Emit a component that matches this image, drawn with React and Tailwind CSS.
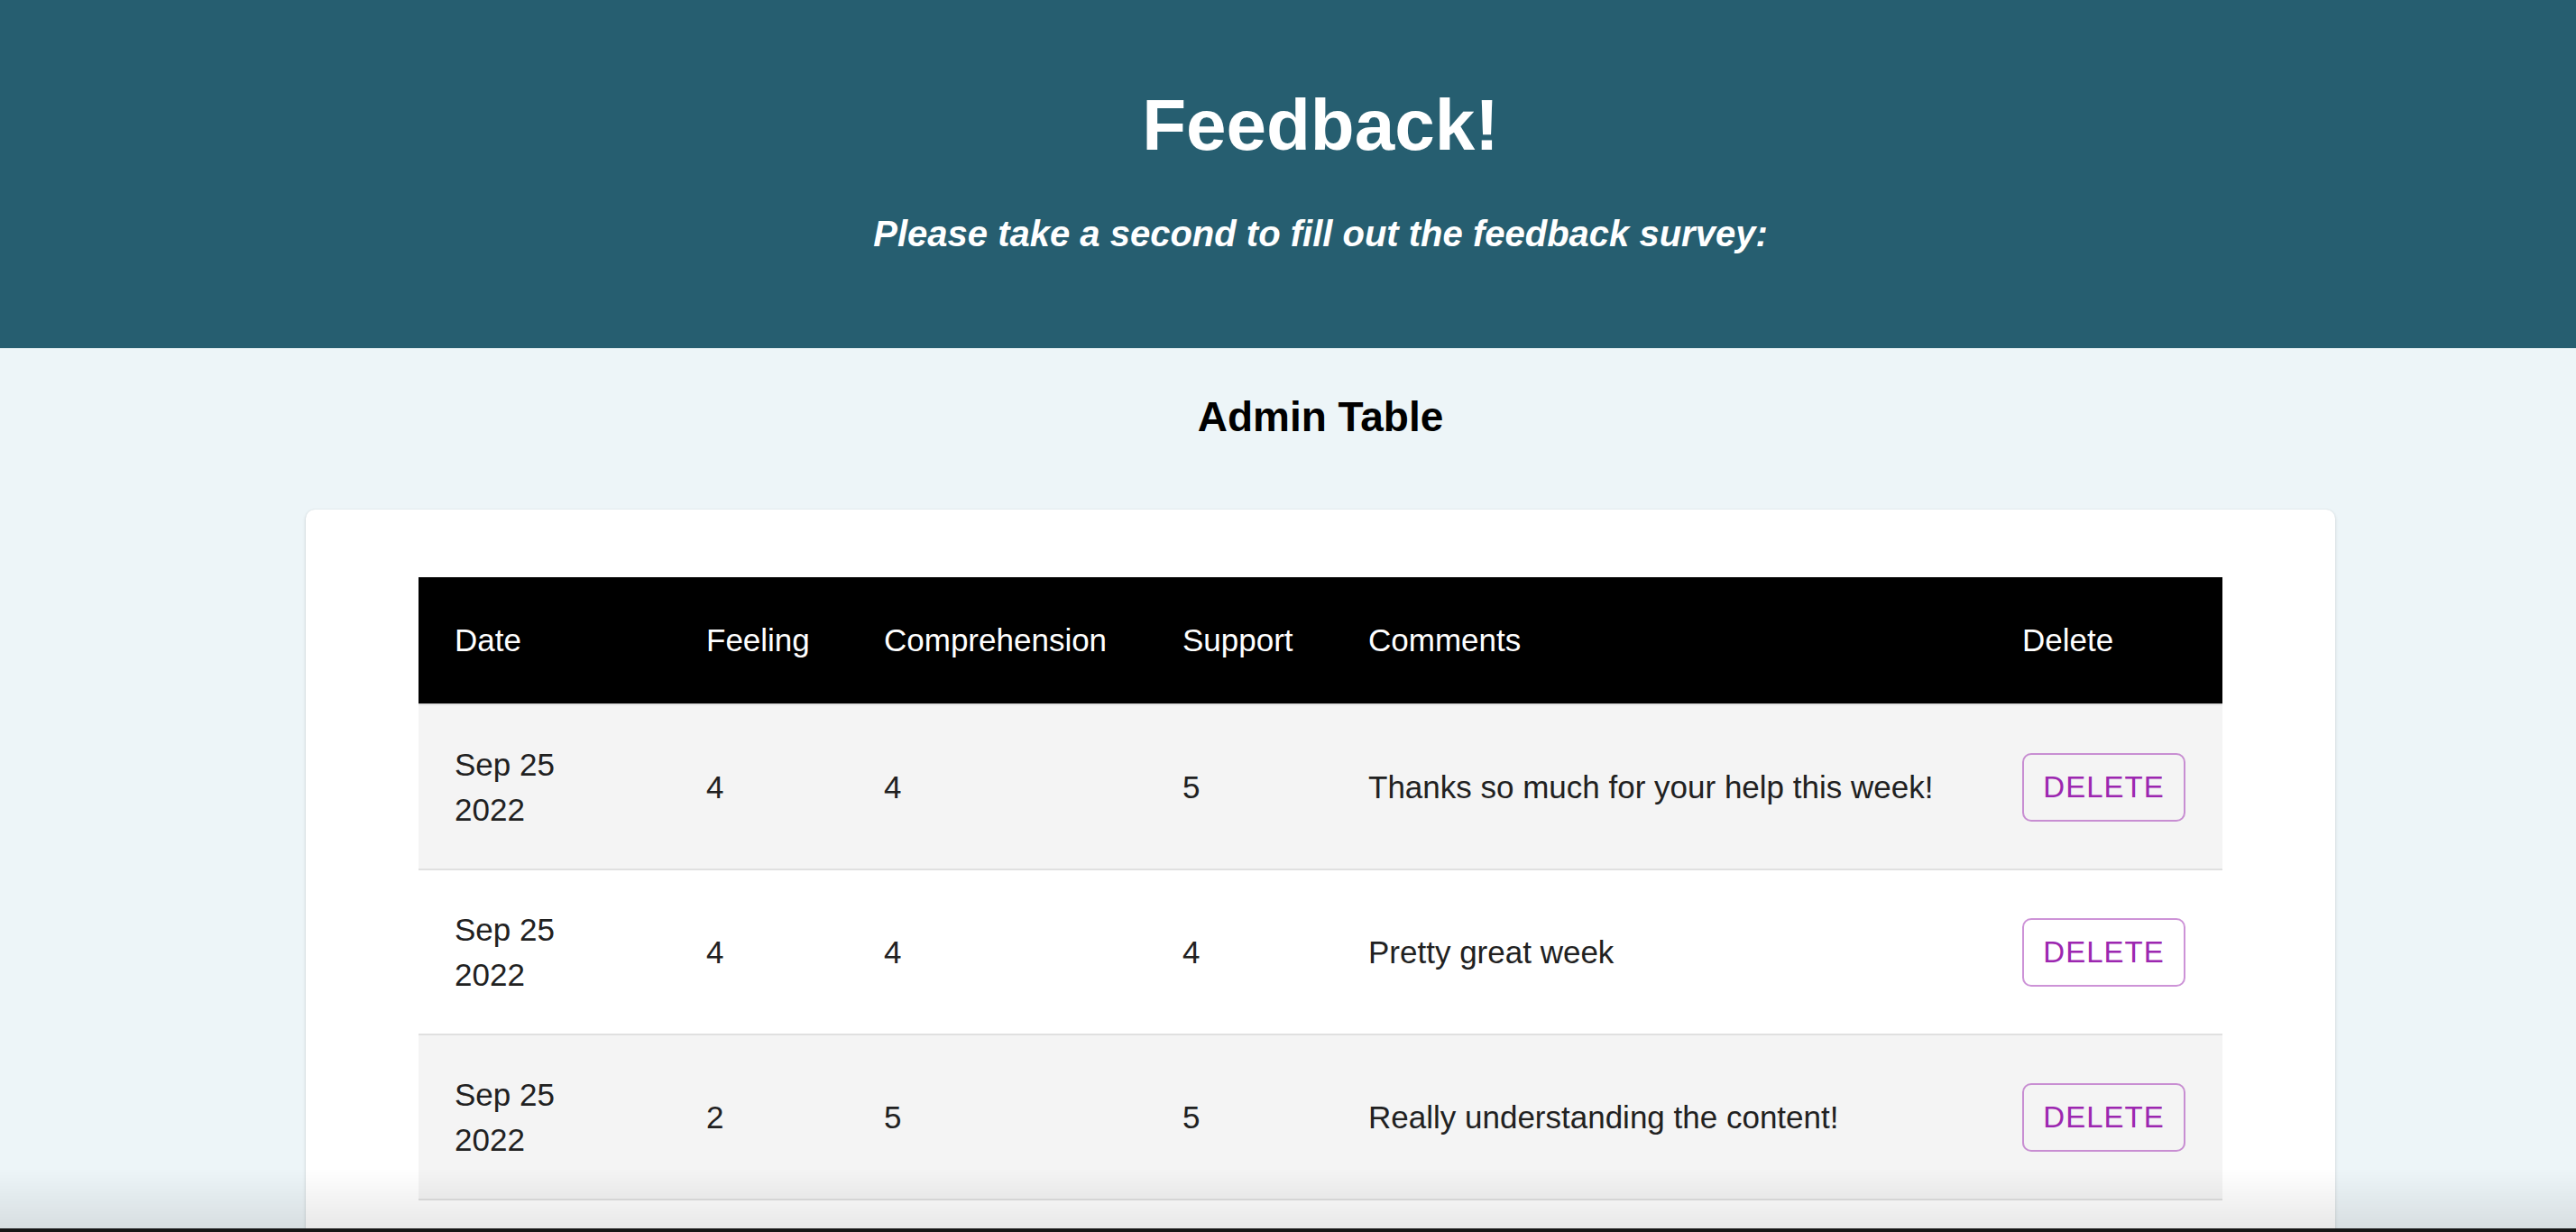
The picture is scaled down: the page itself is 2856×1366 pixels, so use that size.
import React from "react";

const rows = [
  { d1: "Sep 25", d2: "2022", feeling: 4, comp: 4, support: 5, comments: "Thanks so much for your help this week!" },
  { d1: "Sep 25", d2: "2022", feeling: 4, comp: 4, support: 4, comments: "Pretty great week" },
  { d1: "Sep 25", d2: "2022", feeling: 2, comp: 5, support: 5, comments: "Really understanding the content!" },
];

function DeleteButton() {
  return (
    <button className="flex h-[76px] w-[181px] items-center justify-center rounded-[10px] border-2 border-[rgba(156,39,176,0.5)] text-[33px] font-medium uppercase leading-none tracking-[1px] text-[#9c27b0]">
      Delete
    </button>
  );
}

export default function App() {
  return (
    <div className="min-h-screen w-full overflow-hidden bg-[#edf5f8] font-['Liberation_Sans',Arial,sans-serif]">
      <div className="w-[2928px]">
        <header className="flex flex-col items-center bg-[#265e70] pt-[99px] pb-[107px] text-white">
          <h1 className="text-[80px] font-bold leading-[80px]">Feedback!</h1>
          <p className="mt-[60px] text-[40px] font-bold italic leading-[40px]">
            Please take a second to fill out the feedback survey:
          </p>
        </header>

        <h2 className="mt-[53px] text-center text-[46px] font-bold leading-[46px] text-black">Admin Table</h2>

        <div className="mx-auto mt-[80px] w-[2250px] rounded-[10px] bg-white px-[125px] pt-[75px] pb-[75px] shadow-[0_2px_4px_rgba(0,0,0,0.12),0_0_2px_rgba(0,0,0,0.1)]">
          <table className="w-[2000px] table-fixed border-collapse text-left">
            <colgroup>
              <col className="w-[279px]" />
              <col className="w-[197px]" />
              <col className="w-[331px]" />
              <col className="w-[206px]" />
              <col className="w-[725px]" />
              <col className="w-[262px]" />
            </colgroup>
            <thead>
              <tr className="bg-black text-white">
                {["Date", "Feeling", "Comprehension", "Support", "Comments", "Delete"].map((h) => (
                  <th
                    key={h}
                    className="border-b-2 border-[#e0e0e0] px-[40px] py-[40px] text-[35px] font-normal leading-[60px] whitespace-nowrap"
                  >
                    {h}
                  </th>
                ))}
              </tr>
            </thead>
            <tbody>
              {rows.map((r, i) => (
                <tr key={i} className={i % 2 === 0 ? "bg-[#f4f4f4]" : "bg-white"}>
                  <td className="border-b-2 border-[#e0e0e0] px-[40px] py-[40.5px] text-[35px] leading-[50px] text-[#212121]">
                    {r.d1}
                    <br />
                    {r.d2}
                  </td>
                  <td className="border-b-2 border-[#e0e0e0] px-[40px] text-[35px] leading-[50px] text-[#212121]">{r.feeling}</td>
                  <td className="border-b-2 border-[#e0e0e0] px-[40px] text-[35px] leading-[50px] text-[#212121]">{r.comp}</td>
                  <td className="border-b-2 border-[#e0e0e0] px-[40px] text-[35px] leading-[50px] text-[#212121]">{r.support}</td>
                  <td className="border-b-2 border-[#e0e0e0] px-[40px] text-[35px] leading-[50px] whitespace-nowrap text-[#212121]">{r.comments}</td>
                  <td className="border-b-2 border-[#e0e0e0] px-[40px]">
                    <DeleteButton />
                  </td>
                </tr>
              ))}
            </tbody>
          </table>
        </div>
      </div>

      <div className="pointer-events-none fixed inset-x-0 bottom-0 flex flex-col">
        <div className="h-[66px] bg-gradient-to-b from-transparent to-[rgba(0,0,0,0.09)]" />
        <div className="h-[4px] bg-[#161616]" />
      </div>
    </div>
  );
}
